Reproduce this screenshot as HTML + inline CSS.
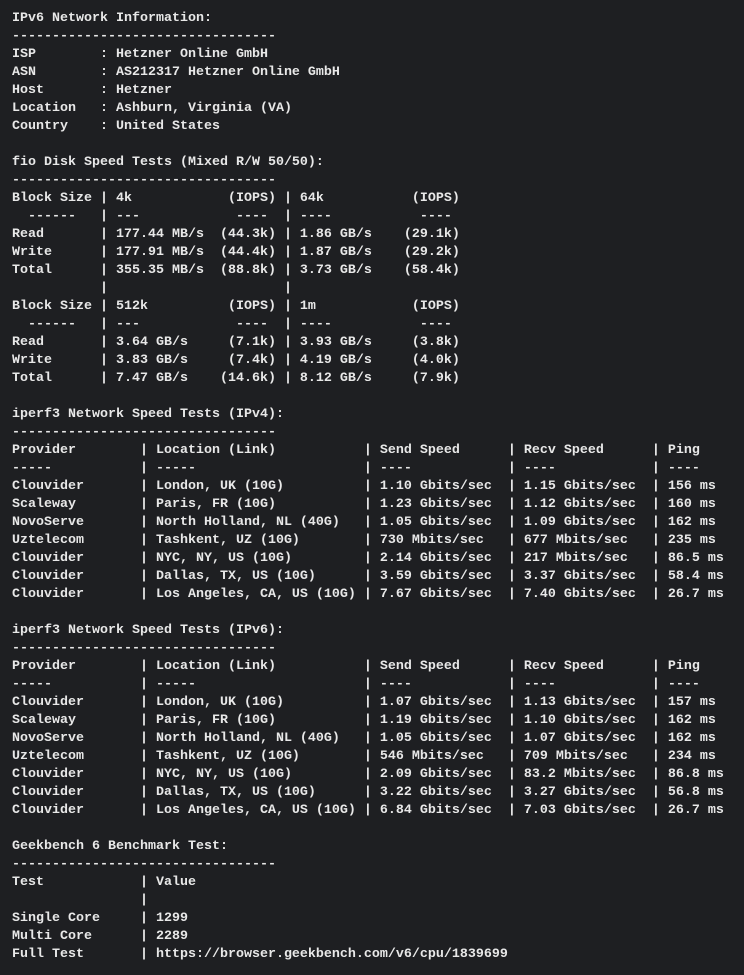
<!DOCTYPE html>
<html><head><meta charset="utf-8"><style>
html,body{margin:0;padding:0;background:#1e1f22;width:744px;height:975px;overflow:hidden}
pre{margin:0;padding:10px 0 0 12px;font-family:"Liberation Mono",monospace;font-size:13.33px;line-height:18px;color:#e8e8e8;font-weight:bold;letter-spacing:0}
</style></head><body><pre>IPv6 Network Information:
---------------------------------
ISP        : Hetzner Online GmbH
ASN        : AS212317 Hetzner Online GmbH
Host       : Hetzner
Location   : Ashburn, Virginia (VA)
Country    : United States

fio Disk Speed Tests (Mixed R/W 50/50):
---------------------------------
Block Size | 4k            (IOPS) | 64k           (IOPS)
  ------   | ---            ----  | ----           ---- 
Read       | 177.44 MB/s  (44.3k) | 1.86 GB/s    (29.1k)
Write      | 177.91 MB/s  (44.4k) | 1.87 GB/s    (29.2k)
Total      | 355.35 MB/s  (88.8k) | 3.73 GB/s    (58.4k)
           |                      |
Block Size | 512k          (IOPS) | 1m            (IOPS)
  ------   | ---            ----  | ----           ---- 
Read       | 3.64 GB/s     (7.1k) | 3.93 GB/s     (3.8k)
Write      | 3.83 GB/s     (7.4k) | 4.19 GB/s     (4.0k)
Total      | 7.47 GB/s    (14.6k) | 8.12 GB/s     (7.9k)

iperf3 Network Speed Tests (IPv4):
---------------------------------
Provider        | Location (Link)           | Send Speed      | Recv Speed      | Ping
-----           | -----                     | ----            | ----            | ----
Clouvider       | London, UK (10G)          | 1.10 Gbits/sec  | 1.15 Gbits/sec  | 156 ms
Scaleway        | Paris, FR (10G)           | 1.23 Gbits/sec  | 1.12 Gbits/sec  | 160 ms
NovoServe       | North Holland, NL (40G)   | 1.05 Gbits/sec  | 1.09 Gbits/sec  | 162 ms
Uztelecom       | Tashkent, UZ (10G)        | 730 Mbits/sec   | 677 Mbits/sec   | 235 ms
Clouvider       | NYC, NY, US (10G)         | 2.14 Gbits/sec  | 217 Mbits/sec   | 86.5 ms
Clouvider       | Dallas, TX, US (10G)      | 3.59 Gbits/sec  | 3.37 Gbits/sec  | 58.4 ms
Clouvider       | Los Angeles, CA, US (10G) | 7.67 Gbits/sec  | 7.40 Gbits/sec  | 26.7 ms

iperf3 Network Speed Tests (IPv6):
---------------------------------
Provider        | Location (Link)           | Send Speed      | Recv Speed      | Ping
-----           | -----                     | ----            | ----            | ----
Clouvider       | London, UK (10G)          | 1.07 Gbits/sec  | 1.13 Gbits/sec  | 157 ms
Scaleway        | Paris, FR (10G)           | 1.19 Gbits/sec  | 1.10 Gbits/sec  | 162 ms
NovoServe       | North Holland, NL (40G)   | 1.05 Gbits/sec  | 1.07 Gbits/sec  | 162 ms
Uztelecom       | Tashkent, UZ (10G)        | 546 Mbits/sec   | 709 Mbits/sec   | 234 ms
Clouvider       | NYC, NY, US (10G)         | 2.09 Gbits/sec  | 83.2 Mbits/sec  | 86.8 ms
Clouvider       | Dallas, TX, US (10G)      | 3.22 Gbits/sec  | 3.27 Gbits/sec  | 56.8 ms
Clouvider       | Los Angeles, CA, US (10G) | 6.84 Gbits/sec  | 7.03 Gbits/sec  | 26.7 ms

Geekbench 6 Benchmark Test:
---------------------------------
Test            | Value
                |
Single Core     | 1299
Multi Core      | 2289
Full Test       | https://browser.geekbench.com/v6/cpu/1839699</pre></body></html>
